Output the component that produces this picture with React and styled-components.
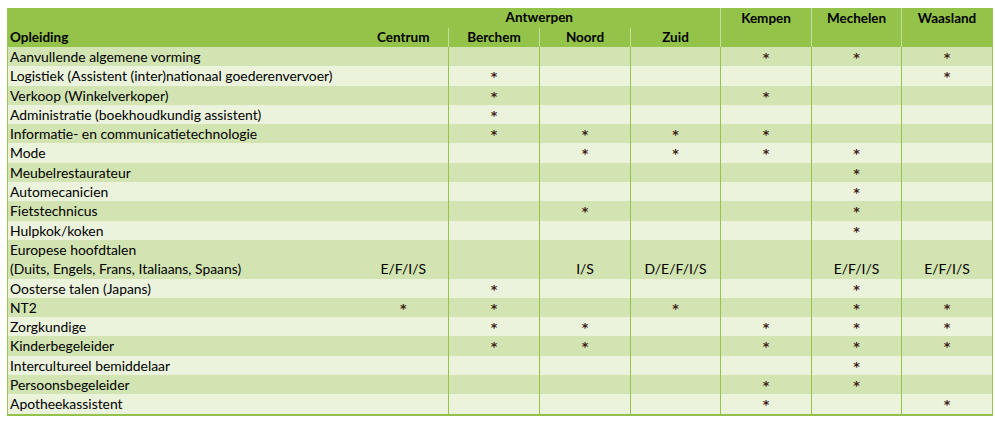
import styled, { createGlobalStyle } from "styled-components";

const GlobalStyle = createGlobalStyle`
  html, body {
    margin: 0;
    background: #ffffff;
  }
  body {
    padding: 8px 0 0 7px;
    font-family: Lato, "Open Sans", sans-serif;
  }
`;

const COLS = ["Centrum", "Berchem", "Noord", "Zuid", "Kempen", "Mechelen", "Waasland"];
const WIDTHS = [351, 90, 91, 91, 90, 91, 90, 91];

const rows = [
  ["Aanvullende algemene vorming", "", "", "", "", "*", "*", "*"],
  ["Logistiek (Assistent (inter)nationaal goederenvervoer)", "", "*", "", "", "", "", "*"],
  ["Verkoop (Winkelverkoper)", "", "*", "", "", "*", "", ""],
  ["Administratie (boekhoudkundig assistent)", "", "*", "", "", "", "", ""],
  ["Informatie- en communicatietechnologie", "", "*", "*", "*", "*", "", ""],
  ["Mode", "", "", "*", "*", "*", "*", ""],
  ["Meubelrestaurateur", "", "", "", "", "", "*", ""],
  ["Automecanicien", "", "", "", "", "", "*", ""],
  ["Fietstechnicus", "", "", "*", "", "", "*", ""],
  ["Hulpkok/koken", "", "", "", "", "", "*", ""],
  [
    ["Europese hoofdtalen", "(Duits, Engels, Frans, Italiaans, Spaans)"],
    "E/F/I/S", "", "I/S", "D/E/F/I/S", "", "E/F/I/S", "E/F/I/S",
  ],
  ["Oosterse talen (Japans)", "", "*", "", "", "", "*", ""],
  ["NT2", "*", "*", "", "*", "", "*", "*"],
  ["Zorgkundige", "", "*", "*", "", "*", "*", "*"],
  ["Kinderbegeleider", "", "*", "*", "", "*", "*", "*"],
  ["Intercultureel bemiddelaar", "", "", "", "", "", "*", ""],
  ["Persoonsbegeleider", "", "", "", "", "*", "*", ""],
  ["Apotheekassistent", "", "", "", "", "*", "", "*"],
];

export default function App() {
  return (
    <>
      <GlobalStyle />
      <Table>
        <colgroup>
          {WIDTHS.map((w, i) => (
            <col key={i} style={{ width: w }} />
          ))}
        </colgroup>
        <thead>
          <tr>
            <HeadCell />
            <HeadCell colSpan={4}>Antwerpen</HeadCell>
            <HeadCell rowSpan={2} $divider $top>
              Kempen
            </HeadCell>
            <HeadCell rowSpan={2} $divider $top>
              Mechelen
            </HeadCell>
            <HeadCell rowSpan={2} $divider $top>
              Waasland
            </HeadCell>
          </tr>
          <tr>
            <HeadCell $left>Opleiding</HeadCell>
            <HeadCell>{COLS[0]}</HeadCell>
            <HeadCell $divider>{COLS[1]}</HeadCell>
            <HeadCell $divider>{COLS[2]}</HeadCell>
            <HeadCell $divider>{COLS[3]}</HeadCell>
          </tr>
        </thead>
        <tbody>
          {rows.map(([name, ...vals], i) => {
            const tall = Array.isArray(name);
            return (
              <Row key={i} $dark={i % 2 === 0} $tall={tall}>
                <NameCell>
                  {tall ? name.map((line) => <div key={line}>{line}</div>) : name}
                </NameCell>
                {vals.map((v, j) => (
                  <ValueCell key={j} $divider={j > 0}>
                    {v === "*" ? <Star>*</Star> : v}
                  </ValueCell>
                ))}
              </Row>
            );
          })}
        </tbody>
      </Table>
    </>
  );
}

const Table = styled.table`
  border-collapse: collapse;
  table-layout: fixed;
  width: 985px;
  font-size: 13.9px;
  color: #000000;
  border-left: 1px solid #9ac458;
  border-right: 1px solid #9ac458;
  border-bottom: 2px solid #93c24b;

  td,
  th {
    padding: 0;
    white-space: nowrap;
  }
`;

const HeadCell = styled.th`
  background: #94c34a;
  height: 19.5px;
  font-size: 13.5px;
  font-weight: bold;
  text-align: ${(p) => (p.$left ? "left" : "center")};
  vertical-align: ${(p) => (p.$top ? "top" : "middle")};
  padding: ${(p) => (p.$left ? "0 0 0 2px" : p.$top ? "2px 0 0 0" : "0")} !important;
  line-height: 17px;
  border-left: ${(p) => (p.$divider ? "1px solid #c4de9c" : "none")};
`;

const Row = styled.tr`
  background: ${(p) => (p.$dark ? "#d2e4b2" : "#ebf3dc")};
  height: ${(p) => (p.$tall ? "38.6px" : "19.3px")};
`;

const NameCell = styled.td`
  padding-left: 2px !important;
  line-height: 19.3px;
  vertical-align: bottom;
`;

const ValueCell = styled.td`
  text-align: center;
  vertical-align: bottom;
  line-height: 19.3px;
  border-left: ${(p) => (p.$divider ? "1px solid #95c34c" : "none")};
`;

const Star = styled.span`
  font-family: "DejaVu Sans", sans-serif;
  font-size: 12.5px;
  font-weight: bold;
  line-height: 0;
  color: #3e2218;
`;
